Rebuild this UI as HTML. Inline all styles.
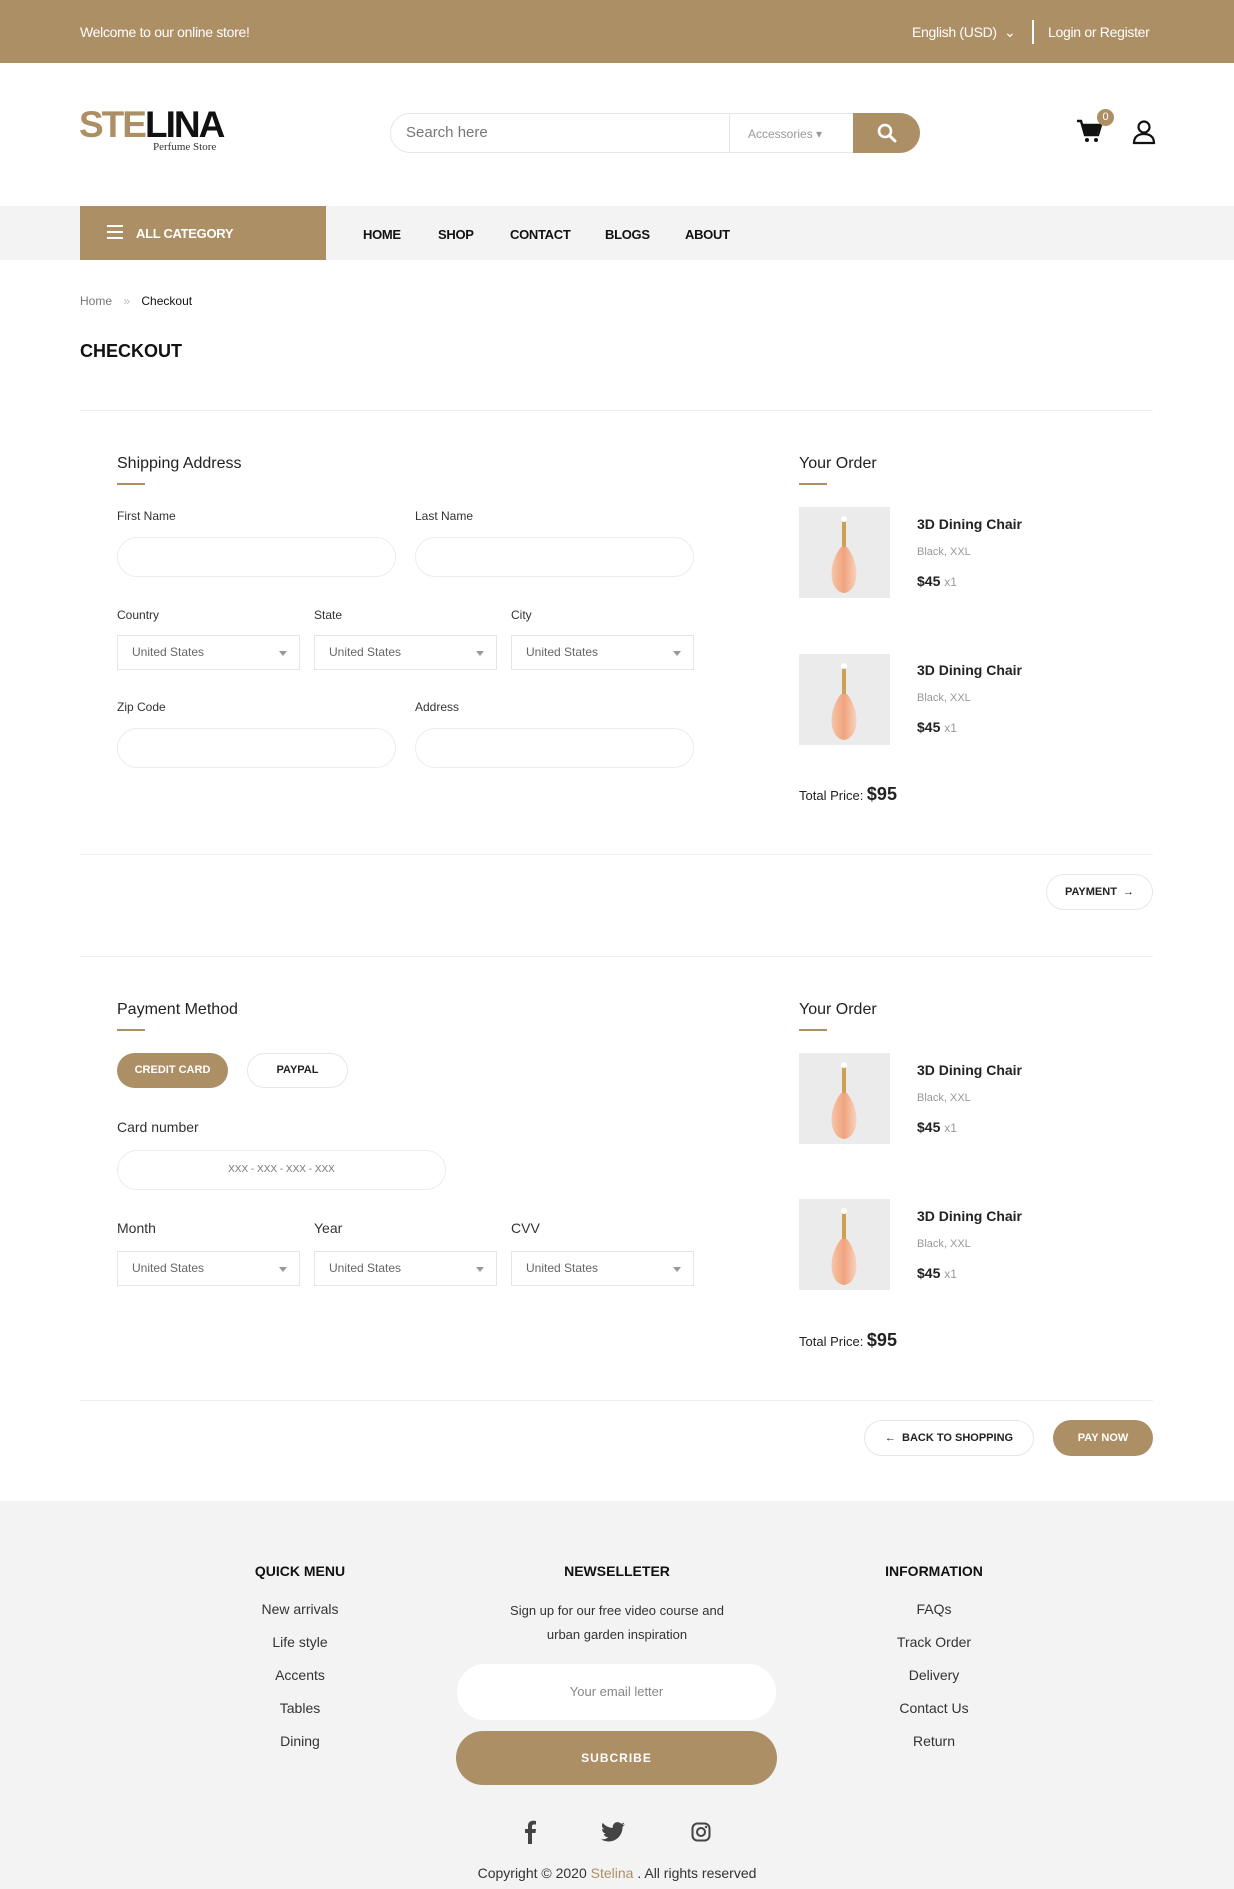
<!DOCTYPE html>
<html><head><meta charset="utf-8"><style>
*{box-sizing:border-box;margin:0;padding:0}
body{width:1234px;height:1889px;position:relative;font-family:"Liberation Sans",sans-serif;color:#222;background:#fff;overflow:hidden}
.a{position:absolute}
.gold{background:#ad8f66}
.t{position:absolute;white-space:nowrap}
.inp{position:absolute;border:1px solid #ececec;border-radius:20px;background:#fff}
.sel{position:absolute;border:1px solid #e6e6e6;background:#fff;font-size:12px;color:#666;padding-left:14px;line-height:33px}
.sel:after{content:"";position:absolute;right:12px;top:15px;border:4px solid transparent;border-top:5px solid #999}
.hr{position:absolute;left:80px;width:1073px;height:1px;background:#eee}
.img{position:absolute;width:91px;height:91px;background:#ebebeb}
.h3{font-size:16px;color:#222}
.ul{position:absolute;width:28px;height:2px;background:#ad8f66}
.lbl{font-size:12px;color:#333}
.fl{position:absolute;text-align:center;font-size:14px;color:#333}
</style></head><body>
<div class="a gold" style="left:0;top:0;width:1234px;height:63px"></div>
<div class="t" style="left:80px;top:24px;font-size:14px;color:#fff;letter-spacing:-0.3px">Welcome to our online store!</div>
<div class="t" style="left:912px;top:24px;font-size:14px;color:#fff;letter-spacing:-0.3px">English (USD) &nbsp;⌄</div>
<div class="a" style="left:1032px;top:20px;width:2px;height:24px;background:#fff"></div>
<div class="t" style="left:1048px;top:24px;font-size:14px;color:#fff;letter-spacing:-0.3px">Login or Register</div>
<div class="t" style="left:79px;top:106px;font-size:37px;font-weight:bold;letter-spacing:-2px;line-height:37px"><span style="color:#ad8f66">STE</span><span style="color:#111">LINA</span></div>
<div class="t" style="left:153px;top:141px;font-family:'Liberation Serif',serif;font-size:11px;color:#333">Perfume Store</div>
<div class="a" style="left:390px;top:113px;width:530px;height:40px;border:1px solid #e6e6e6;border-radius:20px;background:#fff"></div>
<div class="t" style="left:406px;top:124px;font-size:15px;color:#777">Search here</div>
<div class="a" style="left:729px;top:114px;width:1px;height:38px;background:#e6e6e6"></div>
<div class="t" style="left:748px;top:127px;font-size:12px;color:#999">Accessories ▾</div>
<div class="a gold" style="left:853px;top:113px;width:67px;height:40px;border-radius:0 20px 20px 0"></div>
<svg class="a" style="left:876px;top:122px" width="22" height="22" viewBox="0 0 22 22"><circle cx="9" cy="9" r="6" fill="none" stroke="#fff" stroke-width="2.6"/><path d="M13.5 13.5L19 19" stroke="#fff" stroke-width="3" stroke-linecap="round"/></svg>
<svg class="a" style="left:1076px;top:118px" width="28" height="28" viewBox="0 0 28 28"><path d="M1 3h4l4 14h13l3-10H7" fill="none" stroke="#111" stroke-width="2.4"/><path d="M7 7h17l-3 9H9z" fill="#111"/><circle cx="11" cy="22" r="2" fill="#111"/><circle cx="20" cy="22" r="2" fill="#111"/></svg>
<div class="a gold" style="left:1097px;top:109px;width:17px;height:17px;border-radius:50%;color:#fff;font-size:11px;text-align:center;line-height:17px">0</div>
<svg class="a" style="left:1132px;top:119px" width="24" height="26" viewBox="0 0 24 26"><circle cx="12" cy="8" r="5.5" fill="none" stroke="#111" stroke-width="2.2"/><path d="M2 24c0-6 4-9 10-9s10 3 10 9z" fill="none" stroke="#111" stroke-width="2.2"/></svg>
<div class="a" style="left:0;top:206px;width:1234px;height:54px;background:#f3f3f3"></div>
<div class="a gold" style="left:80px;top:206px;width:246px;height:54px"></div>
<div class="a" style="left:107px;top:225px;width:16px;height:2px;background:#fff;box-shadow:0 6px 0 #fff,0 12px 0 #fff"></div>
<div class="t" style="left:136px;top:226px;font-size:13px;font-weight:bold;color:#fff;letter-spacing:-0.3px">ALL CATEGORY</div>
<div class="t" style="left:363px;top:227px;font-size:13px;font-weight:bold;color:#111;letter-spacing:-0.3px">HOME</div>
<div class="t" style="left:438px;top:227px;font-size:13px;font-weight:bold;color:#111;letter-spacing:-0.3px">SHOP</div>
<div class="t" style="left:510px;top:227px;font-size:13px;font-weight:bold;color:#111;letter-spacing:-0.3px">CONTACT</div>
<div class="t" style="left:605px;top:227px;font-size:13px;font-weight:bold;color:#111;letter-spacing:-0.3px">BLOGS</div>
<div class="t" style="left:685px;top:227px;font-size:13px;font-weight:bold;color:#111;letter-spacing:-0.3px">ABOUT</div>
<div class="t" style="left:80px;top:294px;font-size:12px;color:#777">Home <span style="color:#bbb;margin:0 8px">»</span> <span style="color:#111">Checkout</span></div>
<div class="t" style="left:80px;top:341px;font-size:18px;font-weight:bold;color:#111">CHECKOUT</div>
<div class="hr" style="top:410px"></div>

<div class="t h3" style="left:117px;top:455px">Shipping Address</div><div class="ul" style="left:117px;top:483px"></div>
<div class="t lbl" style="left:117px;top:509px">First Name</div>
<div class="t lbl" style="left:415px;top:509px">Last Name</div>
<div class="inp" style="left:117px;top:537px;width:279px;height:40px"></div>
<div class="inp" style="left:415px;top:537px;width:279px;height:40px"></div>
<div class="t lbl" style="left:117px;top:608px">Country</div>
<div class="t lbl" style="left:314px;top:608px">State</div>
<div class="t lbl" style="left:511px;top:608px">City</div>
<div class="sel" style="left:117px;top:635px;width:183px;height:35px">United States</div>
<div class="sel" style="left:314px;top:635px;width:183px;height:35px">United States</div>
<div class="sel" style="left:511px;top:635px;width:183px;height:35px">United States</div>
<div class="t lbl" style="left:117px;top:700px">Zip Code</div>
<div class="t lbl" style="left:415px;top:700px">Address</div>
<div class="inp" style="left:117px;top:728px;width:279px;height:40px"></div>
<div class="inp" style="left:415px;top:728px;width:279px;height:40px"></div>

<div class="t h3" style="left:799px;top:455px">Your Order</div><div class="ul" style="left:799px;top:483px"></div>
<svg width="0" height="0" style="position:absolute"><defs><linearGradient id="g" x1="0" x2="1"><stop offset="0" stop-color="#f6c7a8"/><stop offset=".5" stop-color="#f0a27e"/><stop offset="1" stop-color="#f7d3bd"/></linearGradient></defs></svg>

<div class="img" style="left:799px;top:507px"><svg width="91" height="91"><path d="M45 14v30" stroke="#c9a257" stroke-width="4"/><circle cx="45" cy="12" r="3" fill="#fff"/><path d="M42 40 C28 58 30 84 45 86 C60 84 62 58 48 40z" fill="url(#g)"/></svg></div>
<div class="t" style="left:917px;top:516px;font-size:14px;font-weight:bold;color:#222">3D Dining Chair</div>
<div class="t" style="left:917px;top:546px;font-size:11px;color:#999">Black, XXL</div>
<div class="t" style="left:917px;top:573px;font-size:14px;font-weight:bold;color:#222">$45 <span style="font-weight:normal;font-size:12px;color:#999">x1</span></div>
<div class="img" style="left:799px;top:654px"><svg width="91" height="91"><path d="M45 14v30" stroke="#c9a257" stroke-width="4"/><circle cx="45" cy="12" r="3" fill="#fff"/><path d="M42 40 C28 58 30 84 45 86 C60 84 62 58 48 40z" fill="url(#g)"/></svg></div>
<div class="t" style="left:917px;top:662px;font-size:14px;font-weight:bold;color:#222">3D Dining Chair</div>
<div class="t" style="left:917px;top:692px;font-size:11px;color:#999">Black, XXL</div>
<div class="t" style="left:917px;top:719px;font-size:14px;font-weight:bold;color:#222">$45 <span style="font-weight:normal;font-size:12px;color:#999">x1</span></div>
<div class="t" style="left:799px;top:784px;font-size:13px;color:#222">Total Price: <span style="font-size:18px;font-weight:bold">$95</span></div>
<div class="hr" style="top:854px"></div>
<div class="a" style="left:1046px;top:874px;width:107px;height:36px;border:1px solid #e6e6e6;border-radius:18px;font-size:11px;font-weight:bold;text-align:center;line-height:34px;color:#222">PAYMENT &nbsp;→</div>
<div class="hr" style="top:956px"></div>

<div class="t h3" style="left:117px;top:1001px">Payment Method</div><div class="ul" style="left:117px;top:1029px"></div>
<div class="a gold" style="left:117px;top:1053px;width:111px;height:35px;border-radius:18px;color:#fff;font-size:11px;font-weight:bold;text-align:center;line-height:35px">CREDIT CARD</div>
<div class="a" style="left:247px;top:1053px;width:101px;height:35px;border:1px solid #e6e6e6;border-radius:18px;font-size:11px;font-weight:bold;text-align:center;line-height:33px">PAYPAL</div>
<div class="t" style="left:117px;top:1119px;font-size:14px;color:#333">Card number</div>
<div class="inp" style="left:117px;top:1150px;width:329px;height:40px;font-size:10px;color:#777;text-align:center;line-height:38px">XXX - XXX - XXX - XXX</div>
<div class="t" style="left:117px;top:1220px;font-size:14px;color:#333">Month</div>
<div class="t" style="left:314px;top:1220px;font-size:14px;color:#333">Year</div>
<div class="t" style="left:511px;top:1220px;font-size:14px;color:#333">CVV</div>
<div class="sel" style="left:117px;top:1251px;width:183px;height:35px">United States</div>
<div class="sel" style="left:314px;top:1251px;width:183px;height:35px">United States</div>
<div class="sel" style="left:511px;top:1251px;width:183px;height:35px">United States</div>

<div class="t h3" style="left:799px;top:1001px">Your Order</div><div class="ul" style="left:799px;top:1029px"></div>
<div class="img" style="left:799px;top:1053px"><svg width="91" height="91"><path d="M45 14v30" stroke="#c9a257" stroke-width="4"/><circle cx="45" cy="12" r="3" fill="#fff"/><path d="M42 40 C28 58 30 84 45 86 C60 84 62 58 48 40z" fill="url(#g)"/></svg></div>
<div class="t" style="left:917px;top:1062px;font-size:14px;font-weight:bold;color:#222">3D Dining Chair</div>
<div class="t" style="left:917px;top:1092px;font-size:11px;color:#999">Black, XXL</div>
<div class="t" style="left:917px;top:1119px;font-size:14px;font-weight:bold;color:#222">$45 <span style="font-weight:normal;font-size:12px;color:#999">x1</span></div>
<div class="img" style="left:799px;top:1199px"><svg width="91" height="91"><path d="M45 14v30" stroke="#c9a257" stroke-width="4"/><circle cx="45" cy="12" r="3" fill="#fff"/><path d="M42 40 C28 58 30 84 45 86 C60 84 62 58 48 40z" fill="url(#g)"/></svg></div>
<div class="t" style="left:917px;top:1208px;font-size:14px;font-weight:bold;color:#222">3D Dining Chair</div>
<div class="t" style="left:917px;top:1238px;font-size:11px;color:#999">Black, XXL</div>
<div class="t" style="left:917px;top:1265px;font-size:14px;font-weight:bold;color:#222">$45 <span style="font-weight:normal;font-size:12px;color:#999">x1</span></div>
<div class="t" style="left:799px;top:1330px;font-size:13px;color:#222">Total Price: <span style="font-size:18px;font-weight:bold">$95</span></div>
<div class="hr" style="top:1400px"></div>
<div class="a" style="left:864px;top:1420px;width:170px;height:36px;border:1px solid #e6e6e6;border-radius:18px;font-size:11px;font-weight:bold;text-align:center;line-height:34px;color:#222">← &nbsp;BACK TO SHOPPING</div>
<div class="a gold" style="left:1053px;top:1420px;width:100px;height:36px;border-radius:18px;font-size:11px;font-weight:bold;text-align:center;line-height:36px;color:#fff">PAY NOW</div>

<div class="a" style="left:0;top:1501px;width:1234px;height:388px;background:#f3f3f3"></div>
<div class="fl" style="left:200px;width:200px;top:1563px;font-weight:bold;color:#111">QUICK MENU</div>
<div class="fl" style="left:200px;width:200px;top:1601px">New arrivals</div>
<div class="fl" style="left:200px;width:200px;top:1634px">Life style</div>
<div class="fl" style="left:200px;width:200px;top:1667px">Accents</div>
<div class="fl" style="left:200px;width:200px;top:1700px">Tables</div>
<div class="fl" style="left:200px;width:200px;top:1733px">Dining</div>
<div class="fl" style="left:467px;width:300px;top:1599px;font-size:13px;line-height:24px">Sign up for our free video course and<br>urban garden inspiration</div>
<div class="fl" style="left:467px;width:300px;top:1563px;font-weight:bold;color:#111">NEWSELLETER</div>
<div class="a" style="left:457px;top:1664px;width:319px;height:56px;border-radius:28px;background:#fff;text-align:center;line-height:56px;font-size:13px;color:#888">Your email letter</div>
<div class="a gold" style="left:456px;top:1731px;width:321px;height:54px;border-radius:27px;text-align:center;line-height:54px;font-size:12px;font-weight:bold;color:#fff;letter-spacing:1px">SUBCRIBE</div>
<div class="fl" style="left:834px;width:200px;top:1563px;font-weight:bold;color:#111">INFORMATION</div>
<div class="fl" style="left:834px;width:200px;top:1601px">FAQs</div>
<div class="fl" style="left:834px;width:200px;top:1634px">Track Order</div>
<div class="fl" style="left:834px;width:200px;top:1667px">Delivery</div>
<div class="fl" style="left:834px;width:200px;top:1700px">Contact Us</div>
<div class="fl" style="left:834px;width:200px;top:1733px">Return</div>
<svg class="a" style="left:520px;top:1820px" width="20" height="24" viewBox="0 0 20 24"><path d="M12 24V13h3.5l.5-4h-4V6.5c0-1.2.4-2 2-2h2V1c-.4 0-1.6-.2-3-.2-3 0-5 1.8-5 5.1V9H5v4h3v11z" fill="#444"/></svg>
<svg class="a" style="left:601px;top:1822px" width="24" height="20" viewBox="0 0 24 20"><path d="M24 2.4a10 10 0 01-2.8.8A5 5 0 0023.3.5a10 10 0 01-3.1 1.2A4.9 4.9 0 0011.8 6 14 14 0 011.7.9a4.9 4.9 0 001.5 6.6A4.9 4.9 0 011 6.9a4.9 4.9 0 003.9 4.9 5 5 0 01-2.2.1 4.9 4.9 0 004.6 3.4A9.9 9.9 0 010 17.3 14 14 0 007.5 19.5c9 0 14-7.5 14-14v-.6A10 10 0 0024 2.4z" fill="#444"/></svg>
<svg class="a" style="left:691px;top:1822px" width="20" height="20" viewBox="0 0 20 20"><rect x="1.5" y="1.5" width="17" height="17" rx="5" fill="none" stroke="#444" stroke-width="2"/><circle cx="10" cy="10" r="4" fill="none" stroke="#444" stroke-width="2"/><circle cx="15" cy="5" r="1.2" fill="#444"/></svg>
<div class="fl" style="left:367px;width:500px;top:1865px">Copyright © 2020 <span style="color:#ad8f66">Stelina</span> . All rights reserved</div>
</body></html>
